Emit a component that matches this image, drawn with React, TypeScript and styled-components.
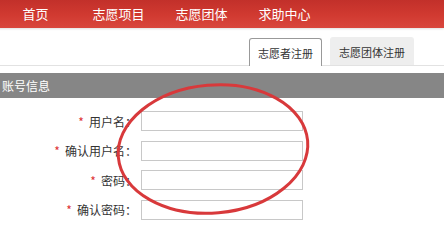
import styled, { createGlobalStyle } from "styled-components";

const GlobalStyle = createGlobalStyle`
  html, body {
    margin: 0;
    padding: 0;
    background: #fff;
  }
  body {
    font-family: "Noto Sans CJK SC", "Liberation Sans", sans-serif;
    overflow: hidden;
  }
`;

const NAV_ITEMS = ["首页", "志愿项目", "志愿团体", "求助中心"];

const FIELDS = [
  { label: "用户名", type: "text" },
  { label: "确认用户名", type: "text" },
  { label: "密码", type: "password" },
  { label: "确认密码", type: "password" },
];

export default function App() {
  return (
    <Page>
      <GlobalStyle />
      <NavBar>
        {NAV_ITEMS.map((item) => (
          <NavItem key={item}>{item}</NavItem>
        ))}
      </NavBar>

      <TabRow>
        <Tab $active>志愿者注册</Tab>
        <Tab>志愿团体注册</Tab>
      </TabRow>

      <SectionBar>账号信息</SectionBar>

      <Form>
        {FIELDS.map((field) => (
          <FormRow key={field.label}>
            <Label>
              <Star>*</Star>
              {field.label}：
            </Label>
            <Input type={field.type} />
          </FormRow>
        ))}
      </Form>

      {/* hand-drawn red ring over the form */}
      <Circle viewBox="0 0 444 227" width="444" height="227">
        <ellipse
          cx="213"
          cy="149"
          rx="95"
          ry="64"
          transform="rotate(-5 213 149)"
          fill="none"
          stroke="#d8393b"
          strokeWidth="3"
        />
      </Circle>
    </Page>
  );
}

const Page = styled.div`
  position: relative;
  width: 444px;
  height: 227px;
  overflow: hidden;
`;

const NavBar = styled.div`
  height: 28px;
  display: flex;
  align-items: center;
  margin-left: -6px;
  background: linear-gradient(to bottom, #c2302a 0%, #d13a31 55%, #d9473d 100%);
  box-shadow: 0 1px 2px rgba(0, 0, 0, 0.12);
`;

const NavItem = styled.div`
  width: 83px;
  text-align: center;
  color: #fff;
  font-size: 13px;
  line-height: 28px;
`;

const TabRow = styled.div`
  height: 37px;
  display: flex;
  justify-content: flex-end;
  align-items: flex-end;
  gap: 8px;
  padding-right: 30px;
  border-bottom: 1px solid #e2e2e2;
`;

const Tab = styled.div<{ $active?: boolean }>`
  height: 28px;
  line-height: 28px;
  padding: 0 8px;
  font-size: 11px;
  color: #333;
  box-sizing: border-box;
  background: ${({ $active }) => ($active ? "#fff" : "#eee")};
  border: 1px solid ${({ $active }) => ($active ? "#999" : "#eee")};
  border-bottom: none;
  border-radius: 3px 3px 0 0;
  margin-bottom: ${({ $active }) => ($active ? "-1px" : "0")};
`;

const SectionBar = styled.div`
  margin-top: 7px;
  height: 25px;
  line-height: 25px;
  background: #868686;
  color: #fff;
  font-size: 12px;
  padding-left: 2px;
`;

const Form = styled.div`
  display: flex;
  flex-direction: column;
  padding-top: 13px;
  gap: 9.5px;
`;

const FormRow = styled.div`
  display: flex;
  align-items: center;
  height: 20px;
`;

const Label = styled.label`
  width: 141px;
  text-align: right;
  font-size: 12px;
  color: #333;
  padding-right: 4px;
  box-sizing: border-box;
`;

const Star = styled.span`
  color: #d33;
  margin-right: 5px;
`;

const Input = styled.input`
  width: 162px;
  height: 20px;
  box-sizing: border-box;
  border: 1px solid #c8c8c8;
  margin: 0;
  padding: 0 4px;
  background: #fff;
`;

const Circle = styled.svg`
  position: absolute;
  left: 0;
  top: 0;
  pointer-events: none;
`;
